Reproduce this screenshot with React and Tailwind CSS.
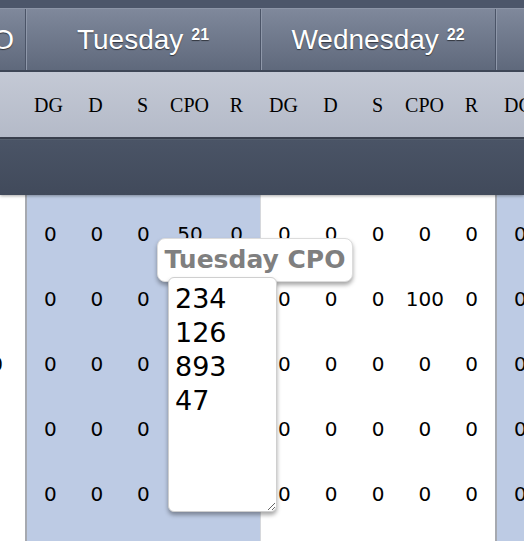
const SUB = ["DG", "D", "S", "CPO", "R"];

const days = [
  {
    name: "Tuesday",
    date: 21,
    blue: true,
    rows: [
      [0, 0, 0, 50, 0],
      [0, 0, 0, 0, 0],
      [0, 0, 0, 0, 0],
      [0, 0, 0, 0, 0],
      [0, 0, 0, 0, 0],
    ],
  },
  {
    name: "Wednesday",
    date: 22,
    blue: false,
    rows: [
      [0, 0, 0, 0, 0],
      [0, 0, 0, 100, 0],
      [0, 0, 0, 0, 0],
      [0, 0, 0, 0, 0],
      [0, 0, 0, 0, 0],
    ],
  },
  {
    name: "Thursday",
    date: 23,
    blue: true,
    rows: [
      [0, 0, 0, 0, 0],
      [0, 0, 0, 0, 0],
      [0, 0, 0, 0, 0],
      [0, 0, 0, 0, 0],
      [0, 0, 0, 0, 0],
    ],
  },
];

const sans = "font-['Liberation_Sans',Arial,sans-serif]";
const dejavu = "font-['DejaVu_Sans',Verdana,sans-serif]";

function DayHeader({ name, date }) {
  return (
    <div className="flex h-full w-[235px] shrink-0 items-center justify-center border-l border-[#4b5467] shadow-[inset_1px_0_0_#8f98aa]">
      <div className="flex items-start text-white [text-shadow:0_1px_1px_rgba(0,0,0,0.55)]">
        <span className="text-[28px] leading-[28px]">{name}</span>
        <span className="ml-[8px] mt-[1px] text-[16px] font-bold leading-[16px]">{date}</span>
      </div>
    </div>
  );
}

function SubHeader() {
  return (
    <div className="flex w-[235px] shrink-0">
      {SUB.map((s) => (
        <div key={s} className="w-[47px] text-center">
          {s}
        </div>
      ))}
    </div>
  );
}

function DayBody({ day }) {
  return (
    <div
      className={
        "flex w-[235px] shrink-0 flex-col pt-[6px] " +
        (day.blue
          ? "border-l-2 border-[#a6a9b0] bg-[#bdcbe4]"
          : "border-l border-[#d6d8dc] bg-white")
      }
    >
      {day.rows.map((r, i) => (
        <div key={i} className="flex h-[65px] items-center">
          {r.map((v, j) => (
            <div key={j} className="w-[47px] text-center">
              {v}
            </div>
          ))}
        </div>
      ))}
    </div>
  );
}

export default function App() {
  return (
    <div className="relative h-[541px] w-[524px] overflow-hidden bg-white">
      {/* top strip */}
      <div className="h-[8px] bg-[#4c566a]" />

      {/* day names */}
      <div className={"flex h-[62px] border-t border-[#8c95a7] bg-[linear-gradient(#7f889b,#5f697c)] " + sans}>
        <div className="flex h-full w-[25px] shrink-0 items-center justify-end overflow-hidden pr-[11px]">
          <span className="shrink-0 text-[28px] leading-[28px] text-white [text-shadow:0_1px_1px_rgba(0,0,0,0.55)]">
            O
          </span>
        </div>
        {days.map((d) => (
          <DayHeader key={d.name} name={d.name} date={d.date} />
        ))}
      </div>

      {/* sub-columns */}
      <div className="h-[2px] bg-[#3e4656]" />
      <div className="flex h-[65px] items-center bg-[linear-gradient(#c4c9d5,#b4bac8)] font-['Liberation_Serif','Times_New_Roman',serif] text-[20px] text-black">
        <div className="w-[25px] shrink-0" />
        {days.map((d) => (
          <SubHeader key={d.name} />
        ))}
      </div>
      <div className="h-[2px] bg-[#3a4150]" />

      {/* dark band */}
      <div className="relative z-10 h-[56px] border-t border-[#56606f] bg-[linear-gradient(#4a5466,#414a5b)] shadow-[0_1px_3px_rgba(0,0,0,0.35)]" />

      {/* body */}
      <div className={"flex h-[346px] text-[20px] text-black " + dejavu}>
        <div className="flex w-[25px] shrink-0 flex-col overflow-hidden bg-white pt-[6px]">
          <div className="h-[65px]" />
          <div className="h-[65px]" />
          <div className="flex h-[65px] items-center justify-end pr-[22px]">
            <span className="shrink-0">0</span>
          </div>
        </div>
        {days.map((d) => (
          <DayBody key={d.name} day={d} />
        ))}
      </div>

      {/* popup editor */}
      <div className="absolute left-[157px] top-[238px] flex h-[44px] w-[196px] items-center justify-center rounded-[8px] border border-[#dcdcdc] bg-white shadow-[0_3px_4px_rgba(0,0,0,0.35)]">
        <span className={"text-[25px] font-bold text-[#7f7f7f] " + dejavu}>Tuesday CPO</span>
      </div>
      <textarea
        readOnly
        defaultValue={"234\n126\n893\n47"}
        className={
          "absolute left-[168px] top-[277px] h-[235px] w-[109px] rounded-[6px] border border-[#cfcfcf] bg-white px-[6px] pt-[4px] text-[27px] leading-[34px] text-black shadow-[0_3px_4px_rgba(0,0,0,0.35)] outline-none " +
          dejavu
        }
      />
    </div>
  );
}
